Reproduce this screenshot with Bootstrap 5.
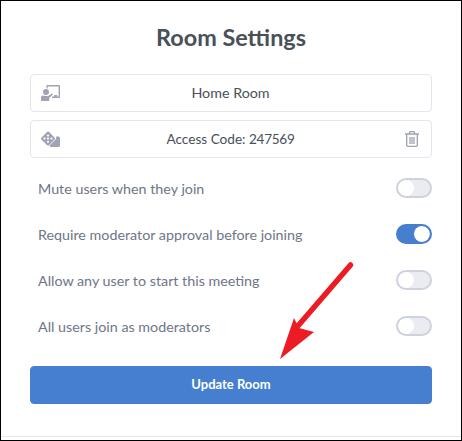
<!DOCTYPE html>
<html lang="en">
<head>
    <meta charset="UTF-8">
    <meta name="viewport" content="width=device-width, initial-scale=1.0">
    <title>Room Settings</title>
    <link href="https://cdn.jsdelivr.net/npm/bootstrap@5.3.0/dist/css/bootstrap.min.css" rel="stylesheet">
    <style>
        body {
            background: #fff;
            font-family: Lato, "Liberation Sans", sans-serif;
        }
        .shot-frame {
            width: 462px;
            height: 441px;
            border: 1px solid #000;
            position: relative;
            overflow: hidden;
        }
        .room-panel {
            height: 436px;
            padding: 0 29px;
            border-bottom: 1px solid #e3e5ef;
        }
        .room-title {
            margin: 0;
            height: 73px;
            padding-top: 20px;
            font-size: 23.4px;
            line-height: 32px;
            font-weight: 700;
            color: #495057;
            text-align: center;
        }
        .room-field {
            height: 38px;
            margin-bottom: 8px;
            padding: 0 11px 0 10px;
            border: 1px solid #e3e5ef;
            border-radius: 4px;
            font-size: 14.3px;
            color: #495057;
        }
        .field-text { flex: 1; text-align: center; }
        .access-code { font-size: 13.6px; }
        .access-code b { font-weight: 400; letter-spacing: -.3px; }
        .field-icon { flex: none; color: #9fa3b4; }
        .field-slot { flex: none; width: 19px; display: flex; justify-content: flex-end; padding-right: 1px; }
        .room-option {
            height: 46px;
            padding-left: 8px;
            font-size: 14.3px;
            color: #6e7687;
        }
        .room-option .form-check-input {
            float: none;
            width: 36px;
            height: 20px;
            margin: 0;
            border: 2px solid #cdd2de;
            background-color: #eaecf2;
            background-position: left center;
            background-image: url("data:image/svg+xml,%3csvg xmlns='http://www.w3.org/2000/svg' viewBox='-4 -4 8 8'%3e%3ccircle r='4' fill='%23fff'/%3e%3c/svg%3e");
        }
        .room-option .form-check-input:checked {
            background-color: #467fcf;
            border-color: #467fcf;
            background-position: right center;
        }
        .room-option .form-switch { padding: 0; margin: 0 0 2px; min-height: 0; display: flex; }
        .room-save {
            display: block;
            width: 100%;
            height: 38px;
            margin-top: 16px;
            padding: 0;
            background: #467fcf;
            border-color: #467fcf;
            border-radius: 4px;
            font-size: 13px;
            font-weight: 700;
        }
        .red-arrow { position: absolute; left: 270px; top: 255px; }
    </style>
</head>
<body class="m-0">
    <div class="shot-frame">
        <div class="room-panel">
            <h1 class="room-title">Room Settings</h1>

            <div class="room-field d-flex align-items-center">
                <svg class="field-icon" width="19" height="16" viewBox="0 0 19 16" fill="currentColor">
                    <path d="M6 0h12.200a.8.8 0 0 1 .8.8v11.400a.8.8 0 0 1-.8.8H11v-1.400h2.200V10h3v1.600h1.400V1.400H6.600v2.200A4 4 0 0 0 5.400 3.200V.8A.8.8 0 0 1 6 0z"/>
                    <circle cx="5" cy="7" r="3"/>
                    <path d="M2 10.600c1 .6 5 .6 5.600.2L11 8.400l1 1.200-3.800 3.400V16H.8A.8.8 0 0 1 0 15.200V12.600A2 2 0 0 1 2 10.600z"/>
                </svg>
                <span class="field-text">Home Room</span>
                <span class="field-slot"></span>
            </div>

            <div class="room-field d-flex align-items-center">
                <svg class="field-icon" width="19" height="16" viewBox="0 0 19 16" fill="currentColor">
                    <path fill-rule="evenodd" d="M.5 6.500 6 1a1.600 1.600 0 0 1 2.200 0l5.300 5.400a1.600 1.600 0 0 1 0 2.200L8.200 14a1.600 1.600 0 0 1-2.200 0L.5 8.700a1.600 1.600 0 0 1 0-2.200zM7 3.600a1 1 0 1 0 .01 0zM3.500 6.600a1 1 0 1 0 .01 0zM7 6.600a1 1 0 1 0 .01 0zM10.500 6.600a1 1 0 1 0 .01 0zM7 9.800a1 1 0 1 0 .01 0z"/>
                    <path d="M14.800 5.500h2.700A1.500 1.500 0 0 1 19 7v7.500a1.500 1.500 0 0 1-1.500 1.500H10a1.500 1.500 0 0 1-1.500-1.400l6-6a2.500 2.500 0 0 0 .3-3.100z"/>
                </svg>
                <span class="field-text access-code">Access Code: <b>247569</b></span>
                <span class="field-slot">
                    <svg class="field-icon" width="14" height="16" viewBox="0 0 14 16" fill="none" stroke="currentColor" stroke-width="1.300">
                        <path d="M0 3h14M4.500 3V1.500a.8.8 0 0 1 .8-.8h3.400a.8.8 0 0 1 .8.800V3M1.700 3v11.300c0 .6.500 1 1 1h8.600c.5 0 1-.4 1-1V3M5 6v7M7 6v7M9 6v7"/>
                    </svg>
                </span>
            </div>

            <div class="room-option d-flex align-items-center justify-content-between">
                <label for="muteSwitch">Mute users when they join</label>
                <div class="form-check form-switch"><input class="form-check-input" type="checkbox" role="switch" id="muteSwitch"></div>
            </div>
            <div class="room-option d-flex align-items-center justify-content-between">
                <label for="approvalSwitch">Require moderator approval before joining</label>
                <div class="form-check form-switch"><input class="form-check-input" type="checkbox" role="switch" id="approvalSwitch" checked></div>
            </div>
            <div class="room-option d-flex align-items-center justify-content-between">
                <label for="anyUserSwitch">Allow any user to start this meeting</label>
                <div class="form-check form-switch"><input class="form-check-input" type="checkbox" role="switch" id="anyUserSwitch"></div>
            </div>
            <div class="room-option d-flex align-items-center justify-content-between">
                <label for="moderatorSwitch">All users join as moderators</label>
                <div class="form-check form-switch"><input class="form-check-input" type="checkbox" role="switch" id="moderatorSwitch"></div>
            </div>

            <button type="button" class="btn btn-primary room-save">Update Room</button>
        </div>

        <!-- annotation drawn over the screenshot -->
        <svg class="red-arrow" width="90" height="110" viewBox="0 0 90 110">
            <path d="M79.500 9 26 71" stroke="#ed1c24" stroke-width="5.500" stroke-linecap="round" fill="none"/>
            <path d="M9 103 23 62 28 72 43 76z" fill="#ed1c24"/>
        </svg>
    </div>
    <script src="https://cdn.jsdelivr.net/npm/bootstrap@5.3.0/dist/js/bootstrap.bundle.min.js"></script>
</body>
</html>
